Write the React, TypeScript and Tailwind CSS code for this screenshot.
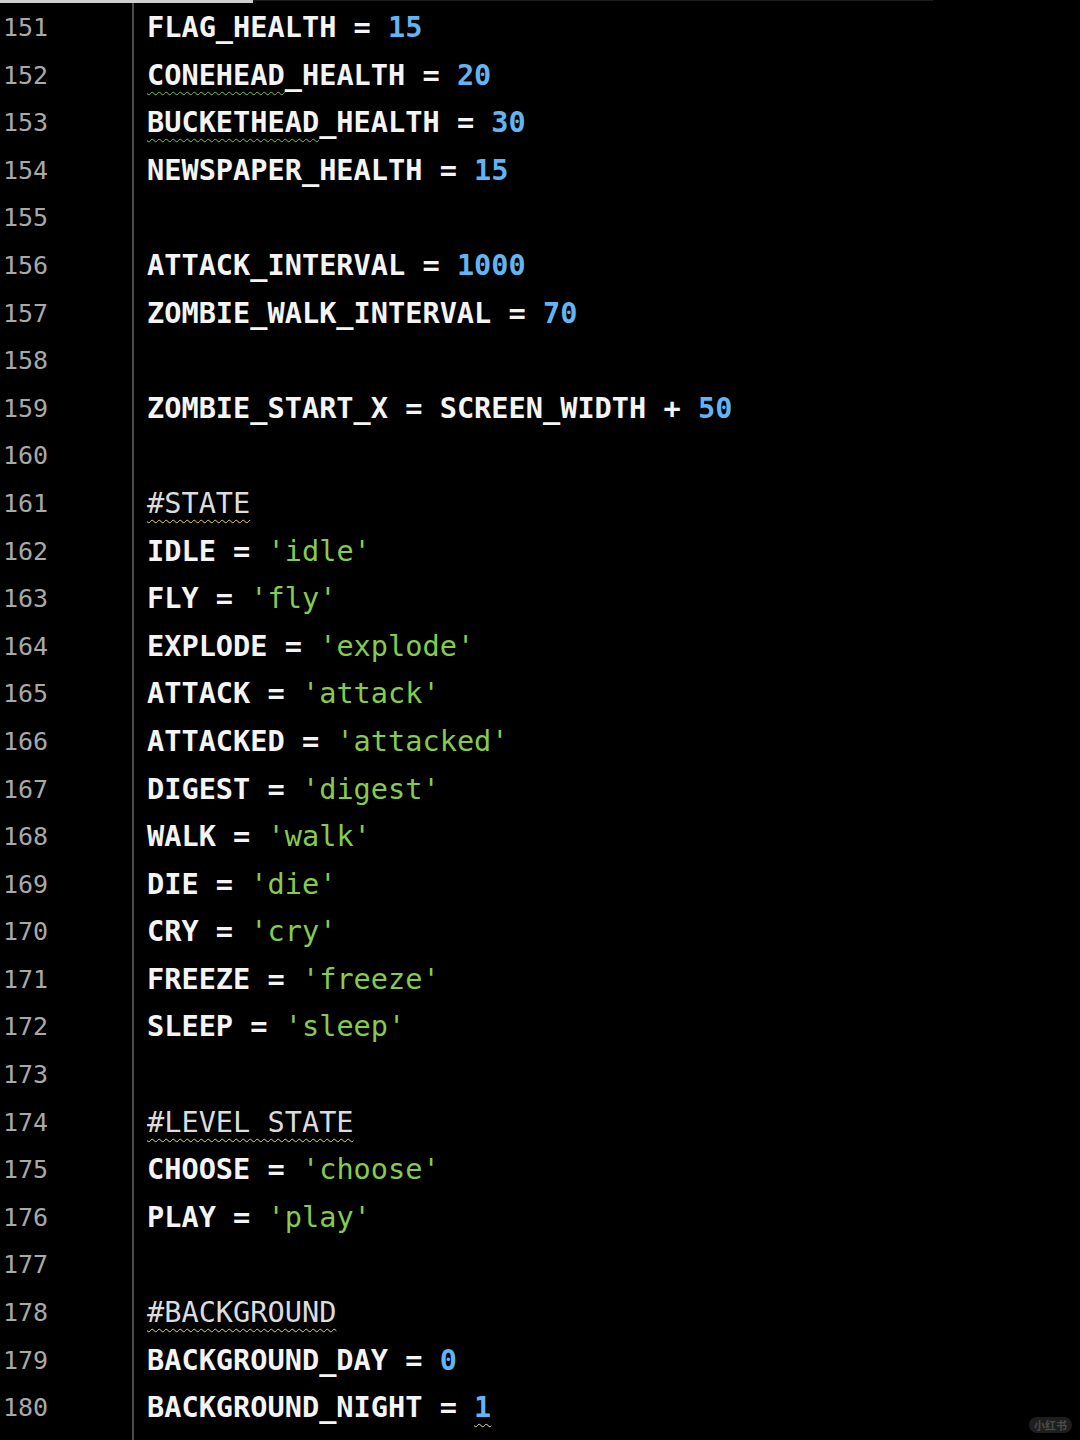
import React from "react";

type Tok = { t: string; k: "id" | "op" | "num" | "str" | "cm" | "warn" | "numw" };

const L = (...toks: Tok[]) => toks;
const id = (t: string): Tok => ({ t, k: "id" });
const warn = (t: string): Tok => ({ t, k: "warn" });
const op = (t: string): Tok => ({ t, k: "op" });
const num = (t: string): Tok => ({ t, k: "num" });
const numw = (t: string): Tok => ({ t, k: "numw" });
const str = (t: string): Tok => ({ t, k: "str" });
const cm = (t: string): Tok => ({ t, k: "cm" });

const lines: Tok[][] = [
  L(id("FLAG_HEALTH"), op(" = "), num("15")),
  L(warn("CONEHEAD"), id("_HEALTH"), op(" = "), num("20")),
  L(warn("BUCKETHEAD"), id("_HEALTH"), op(" = "), num("30")),
  L(id("NEWSPAPER_HEALTH"), op(" = "), num("15")),
  [],
  L(id("ATTACK_INTERVAL"), op(" = "), num("1000")),
  L(id("ZOMBIE_WALK_INTERVAL"), op(" = "), num("70")),
  [],
  L(id("ZOMBIE_START_X"), op(" = "), id("SCREEN_WIDTH"), op(" + "), num("50")),
  [],
  L(cm("#STATE")),
  L(id("IDLE"), op(" = "), str("'idle'")),
  L(id("FLY"), op(" = "), str("'fly'")),
  L(id("EXPLODE"), op(" = "), str("'explode'")),
  L(id("ATTACK"), op(" = "), str("'attack'")),
  L(id("ATTACKED"), op(" = "), str("'attacked'")),
  L(id("DIGEST"), op(" = "), str("'digest'")),
  L(id("WALK"), op(" = "), str("'walk'")),
  L(id("DIE"), op(" = "), str("'die'")),
  L(id("CRY"), op(" = "), str("'cry'")),
  L(id("FREEZE"), op(" = "), str("'freeze'")),
  L(id("SLEEP"), op(" = "), str("'sleep'")),
  [],
  L(cm("#LEVEL STATE")),
  L(id("CHOOSE"), op(" = "), str("'choose'")),
  L(id("PLAY"), op(" = "), str("'play'")),
  [],
  L(cm("#BACKGROUND")),
  L(id("BACKGROUND_DAY"), op(" = "), num("0")),
  L(id("BACKGROUND_NIGHT"), op(" = "), numw("1")),
];

function Token({ tok }: { tok: Tok }) {
  switch (tok.k) {
    case "id":
    case "op":
      return <span className="font-bold text-[#f4f4f4]">{tok.t}</span>;
    case "warn":
      return (
        <span className="font-bold text-[#f4f4f4] underline decoration-wavy decoration-[#7cc43a] decoration-1 underline-offset-[6px]">
          {tok.t}
        </span>
      );
    case "num":
      return <span className="font-bold text-[#62b4f2]">{tok.t}</span>;
    case "numw":
      return (
        <span className="font-bold text-[#62b4f2] underline decoration-wavy decoration-[#e8e0a0] decoration-1 underline-offset-[6px]">
          {tok.t}
        </span>
      );
    case "str":
      return <span className="text-[#86cc4c]">{tok.t}</span>;
    case "cm":
      return (
        <span className="text-[#dcdcdc] underline decoration-wavy decoration-[#e5d84a] decoration-1 underline-offset-[6px]">
          {tok.t}
        </span>
      );
  }
}

export default function App() {
  return (
    <div
      className="relative w-[1080px] h-[1440px] overflow-hidden bg-black"
      style={{ fontFamily: '"DejaVu Sans Mono", "Liberation Mono", monospace' }}
    >
      <div className="absolute top-0 left-0 w-[253px] h-[3px] bg-[#cfcfcf]" />
      <div className="absolute top-0 left-[253px] w-[680px] h-[1px] bg-[#1c1c1c]" />
      <div className="flex h-full">
        <div className="w-[134px] shrink-0 border-r-2 border-[#4a4a4a] pt-[4px] pl-[3px]">
          {lines.map((_, i) => (
            <div
              key={i}
              className="h-[47.6px] leading-[47.6px] text-[25px] text-[#a9a9a9] whitespace-pre"
            >
              {151 + i}
            </div>
          ))}
        </div>
        <div className="flex-1 pl-[13px] pt-[4px]">
          {lines.map((toks, i) => (
            <div key={i} className="h-[47.6px] leading-[47.6px] text-[28.6px] whitespace-pre">
              {toks.map((tok, j) => (
                <Token key={j} tok={tok} />
              ))}
            </div>
          ))}
        </div>
      </div>
      <div className="absolute right-[8px] bottom-[7px] rounded-full bg-[#1e1e1e] px-[5px] py-[1px] text-[11px] leading-[14px] text-[#4a4a4a] font-bold" style={{ fontFamily: '"Noto Sans CJK SC", sans-serif' }}>
        小红书
      </div>
    </div>
  );
}
